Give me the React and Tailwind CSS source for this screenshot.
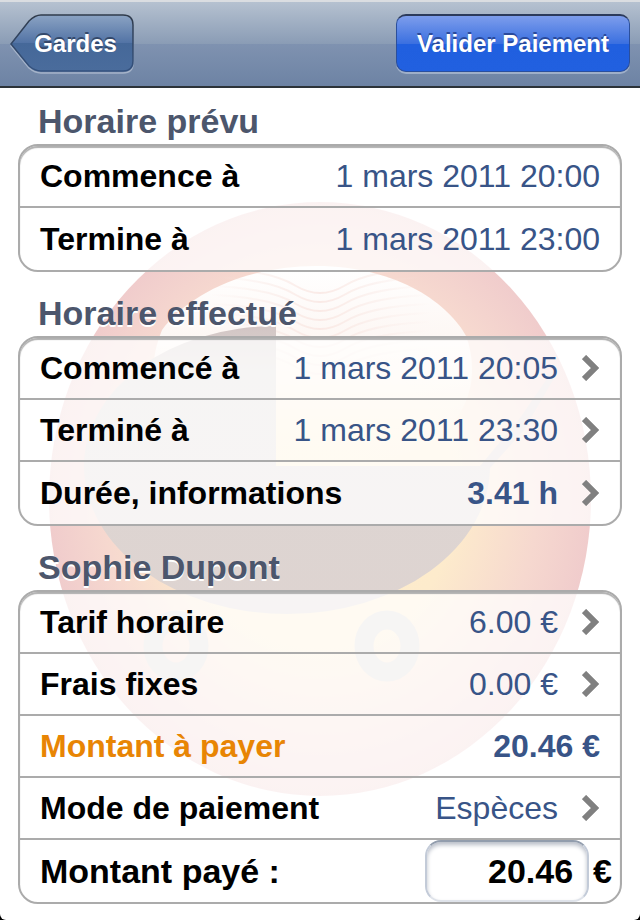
import { useState } from 'react';

const planned = [
  { label: 'Commence à', value: '1 mars 2011 20:00' },
  { label: 'Termine à', value: '1 mars 2011 23:00' },
];

const actual = [
  { label: 'Commencé à', value: '1 mars 2011 20:05', link: true },
  { label: 'Terminé à', value: '1 mars 2011 23:30', link: true },
  { label: 'Durée, informations', value: '3.41 h', link: true, strong: true },
];

const payment = [
  { label: 'Tarif horaire', value: '6.00 €', link: true },
  { label: 'Frais fixes', value: '0.00 €', link: true },
  { label: 'Montant à payer', value: '20.46 €', strong: true, highlight: true },
  { label: 'Mode de paiement', value: 'Espèces', link: true },
];

const ripples = [0, 1, 2, 3, 4, 5, 6, 7, 8, 9];

function Chevron() {
  return (
    <svg viewBox="0 0 18 26" className="w-[18px] h-[26px] ml-6 shrink-0" aria-hidden="true">
      <path d="M2 2 L13 13 L2 24" fill="none" stroke="#808080" strokeWidth="6" />
    </svg>
  );
}

function Row({ label, value, link, strong, highlight }) {
  const Tag = link ? 'button' : 'div';
  return (
    <Tag className="flex w-full h-[62px] items-center justify-between border-b-2 border-[#ababab] last:border-b-0 px-5 text-left text-[32px] leading-[40px]">
      <span className={highlight ? 'font-bold text-[#e88504]' : 'font-bold text-black'}>{label}</span>
      <span className="flex items-center text-[#385487]">
        <span className={strong ? 'font-bold' : ''}>{value}</span>
        {link && <Chevron />}
      </span>
    </Tag>
  );
}

function Group({ title, children }) {
  return (
    <section className="not-first:mt-2">
      <h2 className="pl-5 pt-[13px] pb-[3px] text-[34px] leading-[40px] font-bold text-[#4c566c] [text-shadow:0_2px_0_#ffffff]">
        {title}
      </h2>
      <div className="overflow-hidden rounded-[20px] border-2 border-[#ababab] bg-white/75 shadow-[inset_0_2px_1px_#b0b0b0]">
        {children}
      </div>
    </section>
  );
}

// Pram emblem shown behind the groups
function Watermark() {
  return (
    <svg viewBox="0 0 640 832" preserveAspectRatio="xMidYMin meet" className="absolute inset-x-0 top-0 w-full" aria-hidden="true">
      <defs>
        <radialGradient id="disc" cx="0.5" cy="0.5" r="0.5">
          <stop offset="0" stopColor="#ffeecb" />
          <stop offset="0.5" stopColor="#fdebcc" />
          <stop offset="0.8" stopColor="#f6d8cf" />
          <stop offset="1" stopColor="#f0cccc" />
        </radialGradient>
        <linearGradient id="glow" x1="0" y1="0" x2="0" y2="1">
          <stop offset="0" stopColor="#ffffff" />
          <stop offset="0.35" stopColor="#fdf7f4" />
          <stop offset="0.6" stopColor="#fdf4ea" stopOpacity="0.8" />
          <stop offset="1" stopColor="#fdebcc" stopOpacity="0" />
        </linearGradient>
        <linearGradient id="pram" x1="0" y1="0" x2="0" y2="1">
          <stop offset="0" stopColor="#d3c6c5" />
          <stop offset="0.15" stopColor="#dcd5d2" />
          <stop offset="1" stopColor="#ded4d1" />
        </linearGradient>
        <linearGradient id="fade" gradientUnits="userSpaceOnUse" x1="210" y1="0" x2="430" y2="0">
          <stop offset="0" stopColor="#f9e4df" stopOpacity="0" />
          <stop offset="0.5" stopColor="#f9e4df" />
          <stop offset="1" stopColor="#f9e4df" stopOpacity="0" />
        </linearGradient>
      </defs>
      <ellipse cx="320" cy="411" rx="271" ry="297" fill="url(#disc)" />
      <path d="M316 178 C400 178 450 218 466 248 C482 290 476 378 320 378 C190 378 130 320 162 242 C190 204 250 178 316 178 Z" fill="url(#glow)" />
      <g fill="none" stroke="url(#fade)" strokeWidth="2" opacity="0.7">
        {ripples.map((n) => (
          <path key={n} d="M210 180 Q270 182 296 198 Q320 212 344 198 Q370 182 430 180" transform={`translate(0 ${n * 9})`} />
        ))}
      </g>
      <path d="M276 238 A192 140 0 0 0 84 378 A203 148 0 0 0 490 378 H276 Z" fill="url(#pram)" />
      <path d="M480 378 L520 330 L553 282 L557 285 L524 342 L490 380 Z" fill="#ded4d1" />
      <ellipse cx="176" cy="558" rx="23" ry="26" fill="none" stroke="#dcd5d2" strokeWidth="19" />
      <ellipse cx="387" cy="558" rx="23" ry="26" fill="none" stroke="#dcd5d2" strokeWidth="19" />
    </svg>
  );
}

export default function App() {
  const [amount, setAmount] = useState('20.46');

  return (
    <div className="min-h-screen bg-black">
      <div className="flex min-h-screen flex-col overflow-hidden rounded-b-[6px] bg-white font-['Liberation_Sans',Arial,sans-serif]">
        <header className="flex h-[88px] items-start justify-between border-t-2 border-b-2 border-t-[#dadde1] border-b-[#2c3338] bg-[linear-gradient(#b5c1d0,#8a9cb5_50%,#7f92b0_50%,#6d83a4)] pt-3 px-[10px]">
          <button className="relative h-[60px] w-[125px] pl-1.5 text-center text-[24px] leading-[28px] font-bold text-white [text-shadow:0_-2px_0_#34496b]">
            <svg viewBox="0 0 125 60" className="absolute inset-0 h-full w-full" aria-hidden="true">
              <defs>
                <linearGradient id="back" x1="0" y1="0" x2="0" y2="1">
                  <stop offset="0" stopColor="#8ba3c3" />
                  <stop offset="0.5" stopColor="#5273a5" />
                  <stop offset="0.5" stopColor="#456899" />
                  <stop offset="1" stopColor="#4a6c9c" />
                </linearGradient>
                <linearGradient id="edge" x1="0" y1="0" x2="0" y2="1">
                  <stop offset="0" stopColor="#303b4b" />
                  <stop offset="1" stopColor="#34527f" />
                </linearGradient>
              </defs>
              <path d="M1 32 L19 9 Q25 3 31 3 H113 Q123 3 123 13 V49 Q123 59 113 59 H31 Q25 59 19 54 Z" fill="none" stroke="#a5b3c9" strokeWidth="1.5" />
              <path d="M1 30 L19 7 Q25 1 31 1 H113 Q123 1 123 11 V47 Q123 57 113 57 H31 Q25 57 19 52 Z" fill="url(#back)" stroke="url(#edge)" strokeWidth="1.5" />
            </svg>
            <span className="relative">Gardes</span>
          </button>
          <button className="h-[58px] rounded-[10px] border border-t-2 border-[#2b4f9c] border-t-[#2c3b5c] bg-[linear-gradient(#7d9dec,#3b70e0_50%,#205fdf_50%,#2160e0)] px-5 text-[24px] leading-[28px] font-bold text-white shadow-[0_2px_0_#9fafc8] [text-shadow:0_-2px_0_#2a4a9c]">
            Valider Paiement
          </button>
        </header>

        <main className="relative grow px-[18px] pb-4">
          <Watermark />
          <div className="relative">
            <Group title="Horaire prévu">
              {planned.map((row) => <Row key={row.label} {...row} />)}
            </Group>
            <Group title="Horaire effectué">
              {actual.map((row) => <Row key={row.label} {...row} />)}
            </Group>
            <Group title="Sophie Dupont">
              {payment.map((row) => <Row key={row.label} {...row} />)}
              <div className="flex h-[62px] items-center pl-5 pr-2 text-[34px] leading-[40px] font-bold text-black">
                <label htmlFor="paid" className="grow">Montant payé :</label>
                <input
                  id="paid"
                  inputMode="decimal"
                  value={amount}
                  onChange={(e) => setAmount(e.target.value)}
                  className="h-[62px] w-[164px] rounded-[16px] border-2 border-[#c3cbd8] border-t-[#929dad] border-b-[#dfe3ea] bg-white pr-[14px] text-right shadow-[inset_0_3px_4px_#b9bec8]"
                />
                <span className="pl-1">€</span>
              </div>
            </Group>
          </div>
        </main>
      </div>
    </div>
  );
}
